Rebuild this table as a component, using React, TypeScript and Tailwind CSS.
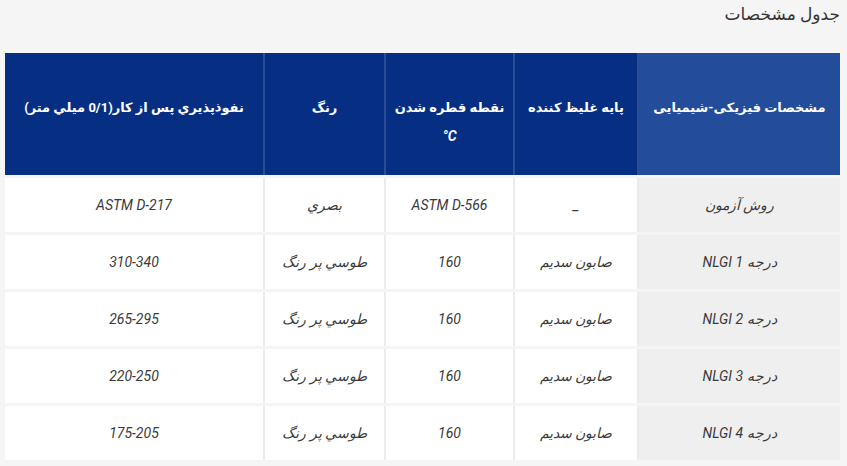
const headers = [
  { label: 'مشخصات فیزیکی-شیمیایی', sub: null, light: true },
  { label: 'پایه غلیظ کننده', sub: null, light: false },
  { label: 'نقطه قطره شدن', sub: '°C', light: false },
  { label: 'رنگ', sub: null, light: false },
  { label: 'نفوذپذیري پس از کار(0/1 میلي متر)', sub: null, light: false },
];

const rows = [
  ['روش آزمون', '_', 'ASTM D-566', 'بصري', 'ASTM D-217'],
  ['درجه NLGI 1', 'صابون سدیم', '160', 'طوسي پر رنگ', '310-340'],
  ['درجه NLGI 2', 'صابون سدیم', '160', 'طوسي پر رنگ', '265-295'],
  ['درجه NLGI 3', 'صابون سدیم', '160', 'طوسي پر رنگ', '220-250'],
  ['درجه NLGI 4', 'صابون سدیم', '160', 'طوسي پر رنگ', '175-205'],
];

const colWidths = ['w-[201px]', 'w-[122px]', 'w-[127px]', 'w-[119px]', 'w-[258px]'];

const App = () => {
  return (
    <div
      dir="rtl"
      className="w-[847px] h-[466px] bg-[#f5f5f5] overflow-hidden text-[#333]"
      style={{ fontFamily: 'Roboto, "DejaVu Sans", sans-serif' }}
    >
      <div className="h-[53px] pr-[7px] pt-[2px]">
        <h2 className="text-[17px] leading-[24px] font-normal text-[#333]">جدول مشخصات</h2>
      </div>

      <div className="mr-[7px] w-[835px] flex flex-col gap-[3px]">
        {/* header */}
        <div className="flex gap-[2px] bg-[#2a4d98] h-[122px]">
          {headers.map((h, i) => (
            <div
              key={i}
              className={`${colWidths[i]} shrink-0 pt-[41px] text-center text-white text-[13px] font-bold leading-[28px] ${
                h.light ? 'bg-[#234c9a]' : 'bg-[#062f84]'
              }`}
            >
              <div>{h.label}</div>
              {h.sub && <div dir="ltr" className="italic text-[14px]">{h.sub}</div>}
            </div>
          ))}
        </div>

        {/* body */}
        {rows.map((row, r) => (
          <div key={r} className="flex gap-[2px] bg-[#ececec] h-[54px]">
            {row.map((cell, c) => (
              <div
                key={c}
                className={`${colWidths[c]} shrink-0 flex items-center justify-center text-[14px] italic text-[#3a3a3a] ${
                  c === 0 ? 'bg-[#efefef]' : 'bg-white'
                }`}
              >
                {cell}
              </div>
            ))}
          </div>
        ))}
      </div>
    </div>
  );
};

export default App;
